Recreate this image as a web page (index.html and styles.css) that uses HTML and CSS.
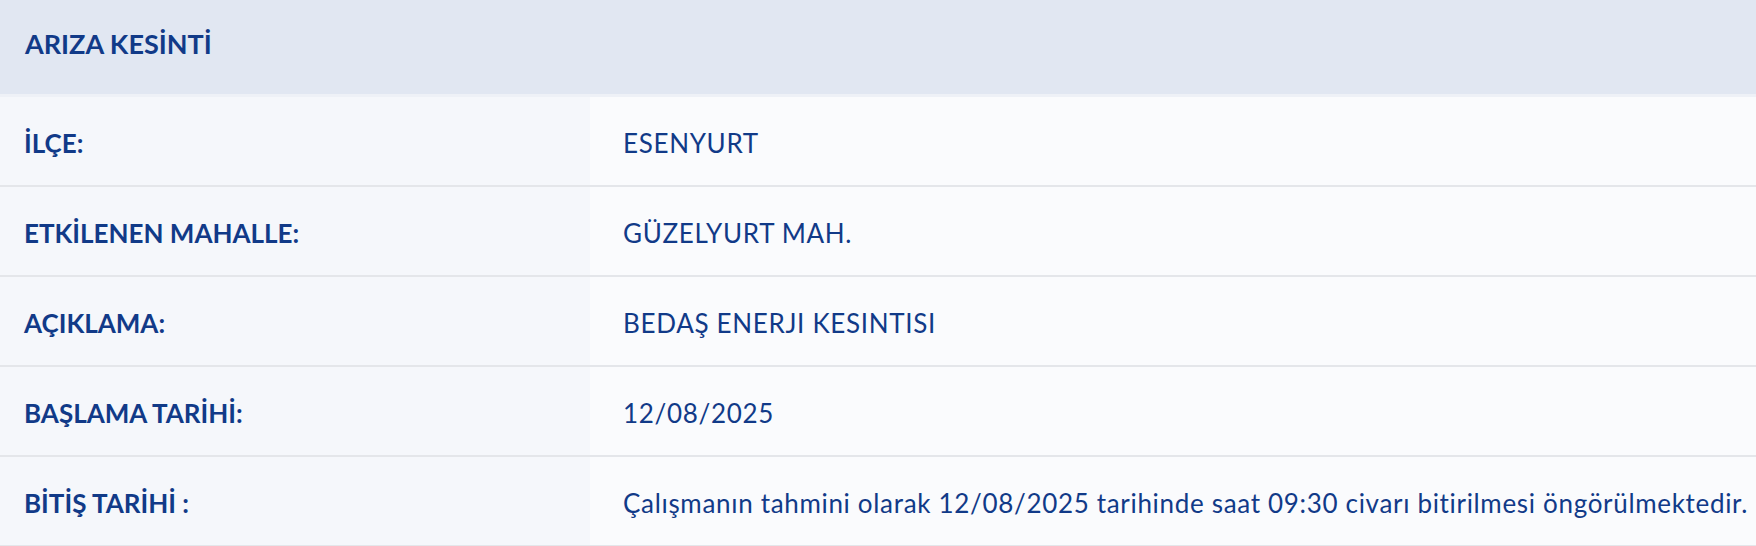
FILE: index.html
```html
<!DOCTYPE html>
<html lang="tr">
<head>
<meta charset="utf-8">
<title>Arıza Kesinti</title>
<link rel="stylesheet" href="styles.css">
</head>
<body>
<div class="card">
  <div class="card-header">ARIZA KESİNTİ</div>
  <div class="row"><div class="label">İLÇE:</div><div class="value">ESENYURT</div></div>
  <div class="row"><div class="label">ETKİLENEN MAHALLE:</div><div class="value">GÜZELYURT MAH.</div></div>
  <div class="row"><div class="label">AÇIKLAMA:</div><div class="value">BEDAŞ ENERJI KESINTISI</div></div>
  <div class="row"><div class="label">BAŞLAMA TARİHİ:</div><div class="value">12/08/2025</div></div>
  <div class="row"><div class="label">BİTİŞ TARİHİ :</div><div class="value">Çalışmanın tahmini olarak 12/08/2025 tarihinde saat 09:30 civarı bitirilmesi öngörülmektedir.</div></div>
</div>
</body>
</html>
```
FILE: styles.css
```css
html, body {
  margin: 0;
  padding: 0;
  background: #fafbfd;
}
body {
  font-family: Lato, "Noto Sans", sans-serif;
  color: #113a88;
}
.card {
  display: flex;
  flex-direction: column;
  width: 1756px;
}
.card-header {
  height: 97px;
  box-sizing: border-box;
  padding: 0 0 8px 25px;
  display: flex;
  align-items: center;
  background: #e1e7f2;
  border-bottom: 3px solid #eef1f7;
  font-weight: 700;
  font-size: 27px;
}
.row {
  display: grid;
  grid-template-columns: 590px 1fr;
  height: 90px;
  box-sizing: border-box;
  border-bottom: 2px solid #e4e6ea;
}
.label {
  display: flex;
  align-items: center;
  padding: 3px 0 0 24px;
  background: #f5f7fb;
  font-weight: 700;
  font-size: 26px;
}
.value {
  display: flex;
  align-items: center;
  padding: 3px 0 0 33px;
  background: #fafbfd;
  font-size: 26px;
  letter-spacing: 0.68px;
}
```
